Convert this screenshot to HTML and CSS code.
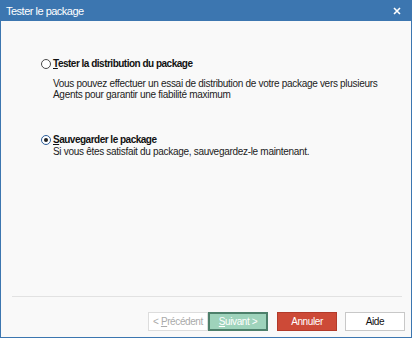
FILE: index.html
```html
<!DOCTYPE html>
<html lang="fr">
<head>
    <meta charset="UTF-8">
    <title>Tester le package</title>
    <link rel="stylesheet" href="styles.css">
</head>
<body>
    <div class="window">
        <div class="titlebar">
            <span class="title">Tester le package</span>
            <svg class="close" width="8" height="8" viewBox="0 0 8 8">
                <path d="M1 1L7 7M7 1L1 7" stroke="#fff" stroke-width="1.6"/>
            </svg>
        </div>
        <div class="content">
            <div class="options">
                <div class="option">
                    <div class="option-head">
                        <span class="radio"></span>
                        <span class="label"><u>T</u>ester la distribution du package</span>
                    </div>
                    <p class="desc">Vous pouvez effectuer un essai de distribution de votre package vers plusieurs<br>Agents pour garantir une fiabilité maximum</p>
                </div>
                <div class="option">
                    <div class="option-head">
                        <span class="radio checked"></span>
                        <span class="label"><u>S</u>auvegarder le package</span>
                    </div>
                    <p class="desc desc-tight">Si vous êtes satisfait du package, sauvegardez-le maintenant.</p>
                </div>
            </div>
            <div class="footer">
                <div class="separator"></div>
                <div class="buttons">
                    <button class="btn btn-prev" disabled>&lt; <u>P</u>récédent</button>
                    <button class="btn btn-next"><u>S</u>uivant &gt;</button>
                    <button class="btn btn-cancel">Annuler</button>
                    <button class="btn btn-help">Aide</button>
                </div>
            </div>
        </div>
    </div>
</body>
</html>
```

FILE: styles.css
```css
* { box-sizing: border-box; }
body {
    margin: 0;
    font-family: 'Liberation Sans', Arial, sans-serif;
    font-size: 10px;
    letter-spacing: -0.3px;
    color: #222;
    background: #fff;
}
.window {
    width: 412px;
    height: 338px;
    display: flex;
    flex-direction: column;
}
.titlebar {
    height: 21px;
    background: #3c76b0;
    color: #fff;
    display: flex;
    align-items: center;
    justify-content: space-between;
    padding: 0 11px 0 6px;
}
.title {
    font-size: 11px;
    letter-spacing: -0.5px;
}
.close {
    display: block;
}
.content {
    flex: 1;
    background: #f9f9f9;
    border: 1px solid #3c76b0;
    border-top: none;
    display: flex;
    flex-direction: column;
    justify-content: space-between;
}
.options {
    padding: 37px 20px 0 40px;
    display: flex;
    flex-direction: column;
    gap: 34px;
}
.option-head {
    display: flex;
    align-items: center;
    gap: 2px;
}
.radio {
    width: 10px;
    height: 10px;
    border: 1px solid #4a4a4a;
    border-radius: 50%;
    background: #fff;
    display: flex;
    align-items: center;
    justify-content: center;
}
.radio.checked {
    border-color: #2b5d99;
}
.radio.checked::after {
    content: '';
    width: 4px;
    height: 4px;
    border-radius: 50%;
    background: #222;
}
.label {
    font-weight: bold;
    color: #111;
    letter-spacing: -0.5px;
    font-size: 10px;
}
.desc {
    margin: 9px 0 0 12px;
    line-height: 11px;
    color: #222;
    white-space: nowrap;
}
.desc-tight {
    margin-top: 1px;
}
.footer {
    padding: 0 6px 6px 6px;
}
.separator {
    height: 1px;
    background: #e2e2e2;
    margin: 0 3px 15px 5px;
}
.buttons {
    display: flex;
    justify-content: flex-end;
}
.btn {
    width: 60px;
    height: 19px;
    font-family: 'Liberation Sans', Arial, sans-serif;
    font-size: 10px;
    letter-spacing: -0.4px;
    border: 1px solid #ccc;
    background: #fff;
    color: #111;
    padding: 0;
}
.btn-prev {
    color: #aaa;
    border-color: #ddd;
}
.btn-next {
    background: #9ed3bb;
    border: 2px solid #4d806b;
    color: #fff;
    margin-right: 9px;
}
.btn-cancel {
    background: #cd4a37;
    border-color: #b23a2a;
    color: #fff;
    margin-right: 8px;
}
.btn-help {
    border-color: #c8c8c8;
}
```
